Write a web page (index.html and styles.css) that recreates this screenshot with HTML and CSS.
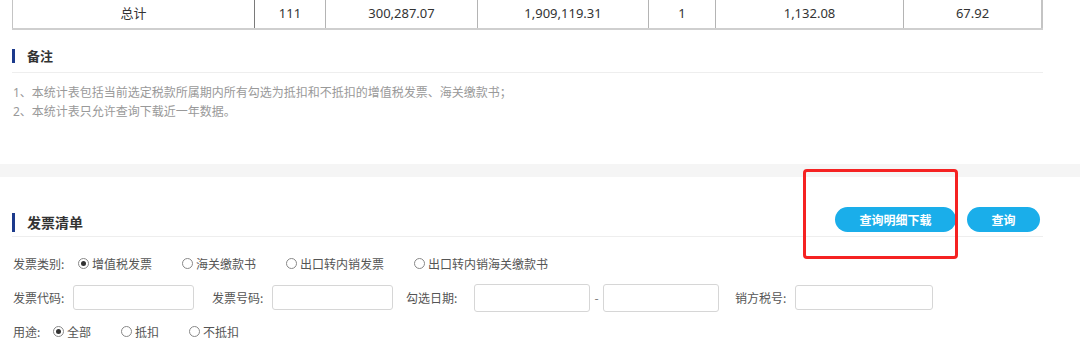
FILE: index.html
```html
<!DOCTYPE html>
<html lang="zh-CN">
<head>
    <meta charset="UTF-8">
    <meta name="viewport" content="width=device-width, initial-scale=1.0">
    <title>发票统计</title>
    <link rel="stylesheet" href="styles.css">
</head>
<body>
    <div class="page">
        <table class="sum-table">
            <tr>
                <td class="col-name">总计</td>
                <td class="col-a">111</td>
                <td class="col-b">300,287.07</td>
                <td class="col-c">1,909,119.31</td>
                <td class="col-d">1</td>
                <td class="col-e">1,132.08</td>
                <td class="col-f">67.92</td>
            </tr>
        </table>

        <div class="remark">
            <h3 class="sec-title">备注</h3>
            <div class="notes">
                <p>1、本统计表包括当前选定税款所属期内所有勾选为抵扣和不抵扣的增值税发票、海关缴款书；</p>
                <p>2、本统计表只允许查询下载近一年数据。</p>
            </div>
        </div>
    </div>

    <div class="band"></div>

    <div class="page">
        <div class="list-head">
            <h3 class="sec-title sec-title-lg">发票清单</h3>
            <div class="btns">
                <button class="btn btn-wide">查询明细下载</button>
                <button class="btn">查询</button>
            </div>
            <!-- annotation box drawn over the download button -->
            <div class="mark"></div>
        </div>

        <div class="form-row row-type">
            <span class="label label-type">发票类别:</span>
            <label class="opt"><span class="radio checked"></span>增值税发票</label>
            <label class="opt"><span class="radio"></span>海关缴款书</label>
            <label class="opt"><span class="radio"></span>出口转内销发票</label>
            <label class="opt"><span class="radio"></span>出口转内销海关缴款书</label>
        </div>

        <div class="form-row row-fields">
            <span class="label field-label">发票代码:</span>
            <input type="text" class="text-box">
            <span class="label field-label gap-18">发票号码:</span>
            <input type="text" class="text-box">
            <span class="label field-label field-label-date gap-13">勾选日期:</span>
            <input type="text" class="text-box text-box-date">
            <span class="dash">-</span>
            <input type="text" class="text-box text-box-date">
            <span class="label field-label gap-16">销方税号:</span>
            <input type="text" class="text-box text-box-tax">
        </div>

        <div class="form-row row-use">
            <span class="label label-use">用途:</span>
            <label class="opt"><span class="radio checked"></span>全部</label>
            <label class="opt"><span class="radio"></span>抵扣</label>
            <label class="opt"><span class="radio"></span>不抵扣</label>
        </div>
    </div>
</body>
</html>
```

FILE: styles.css
```css
body {
    margin: 0;
    background-color: #fff;
    font-family: "Noto Sans", "Noto Sans CJK SC", sans-serif;
    font-size: 12px;
    color: #555;
}
.page {
    width: 1031px;
    margin-left: 12px;
}

/* summary table */
.sum-table {
    width: 1031px;
    table-layout: fixed;
    border-collapse: collapse;
    font-size: 13px;
    color: #333;
}
.sum-table td {
    height: 28px;
    padding: 0;
    line-height: 26px;
    vertical-align: top;
    text-align: center;
    border-left: 1px solid #b4b4b4;
    border-bottom: 2px solid #cfcfcf;
}
.sum-table td:last-child {
    border-right: 2px solid #c4c4c4;
}
.sum-table .col-name { width: 241px; border-left-color: #c4c4c4; }
.sum-table .col-a { width: 70px; border-left-color: #7a7a7a; }
.sum-table .col-b { width: 151px; }
.sum-table .col-c { width: 170px; }
.sum-table .col-d { width: 66px; }
.sum-table .col-e { width: 187px; }
.sum-table .col-f { width: 137px; }

/* section titles */
.sec-title {
    position: relative;
    margin: 0;
    padding-left: 15px;
    font-size: 13px;
    font-weight: bold;
    line-height: 20px;
    color: #333;
}
.sec-title::before {
    content: "";
    position: absolute;
    left: 0;
    top: 3px;
    width: 3px;
    height: 14px;
    background-color: #1c3a8c;
}
.sec-title-lg {
    font-size: 14px;
    line-height: 19px;
}
.sec-title-lg::before {
    top: 0;
    height: 19px;
}

.remark {
    margin-top: 16px;
}
.remark .sec-title {
    padding-bottom: 6px;
    border-bottom: 1px solid #eee;
}
.notes {
    padding: 10px 0 0 1px;
    color: #999;
}
.notes p {
    margin: 0;
    line-height: 19px;
}

.band {
    height: 13px;
    margin-top: 43px;
    background-color: #f5f5f5;
}

/* invoice list header */
.list-head {
    position: relative;
    display: flex;
    align-items: flex-end;
    justify-content: space-between;
    padding-top: 30px;
    padding-bottom: 4px;
    border-bottom: 1px solid #eee;
}
.btns {
    display: flex;
    gap: 11px;
    margin-right: 3px;
}
.btn {
    width: 73px;
    height: 25px;
    padding: 0;
    border: none;
    border-radius: 13px;
    background-color: #1aaeea;
    color: #fff;
    font-family: "Noto Sans CJK SC", sans-serif;
    font-size: 12px;
    font-weight: bold;
    cursor: pointer;
}
.btn-wide {
    width: 121px;
}
.mark {
    position: absolute;
    left: 791px;
    top: -8px;
    width: 149px;
    height: 84px;
    border: 3px solid #f52222;
    border-radius: 4px;
}

/* form rows */
.form-row {
    display: flex;
    align-items: center;
    padding-left: 1px;
    font-family: "Noto Sans CJK SC", sans-serif;
}
.row-type {
    height: 20px;
    margin-top: 16px;
}
.row-fields {
    height: 25px;
    margin-top: 12px;
}
.row-use {
    height: 20px;
    margin-top: 11px;
}
.label {
    white-space: nowrap;
}
.label-type {
    width: 65px;
}
.label-use {
    width: 40px;
}
.opt {
    display: flex;
    align-items: center;
    margin-right: 30px;
    color: #555;
}
.radio {
    box-sizing: border-box;
    position: relative;
    width: 11px;
    height: 11px;
    margin-right: 3px;
    border: 1px solid #888;
    border-radius: 50%;
    background-color: #fff;
}
.radio.checked::after {
    content: "";
    position: absolute;
    left: 2px;
    top: 2px;
    width: 5px;
    height: 5px;
    border-radius: 50%;
    background-color: #333;
}
.field-label {
    width: 60px;
}
.field-label-date {
    width: 68px;
}
.gap-18 { margin-left: 18px; }
.gap-13 { margin-left: 13px; }
.gap-16 { margin-left: 16px; }
.text-box {
    box-sizing: border-box;
    width: 121px;
    height: 25px;
    margin: 0;
    padding: 0 6px;
    border: 1px solid #d6d6d6;
    border-radius: 3px;
    background-color: #fff;
}
.text-box-date {
    width: 116px;
    height: 28px;
}
.text-box-tax {
    width: 138px;
}
.dash {
    width: 13px;
    text-align: center;
    color: #777;
}
```
